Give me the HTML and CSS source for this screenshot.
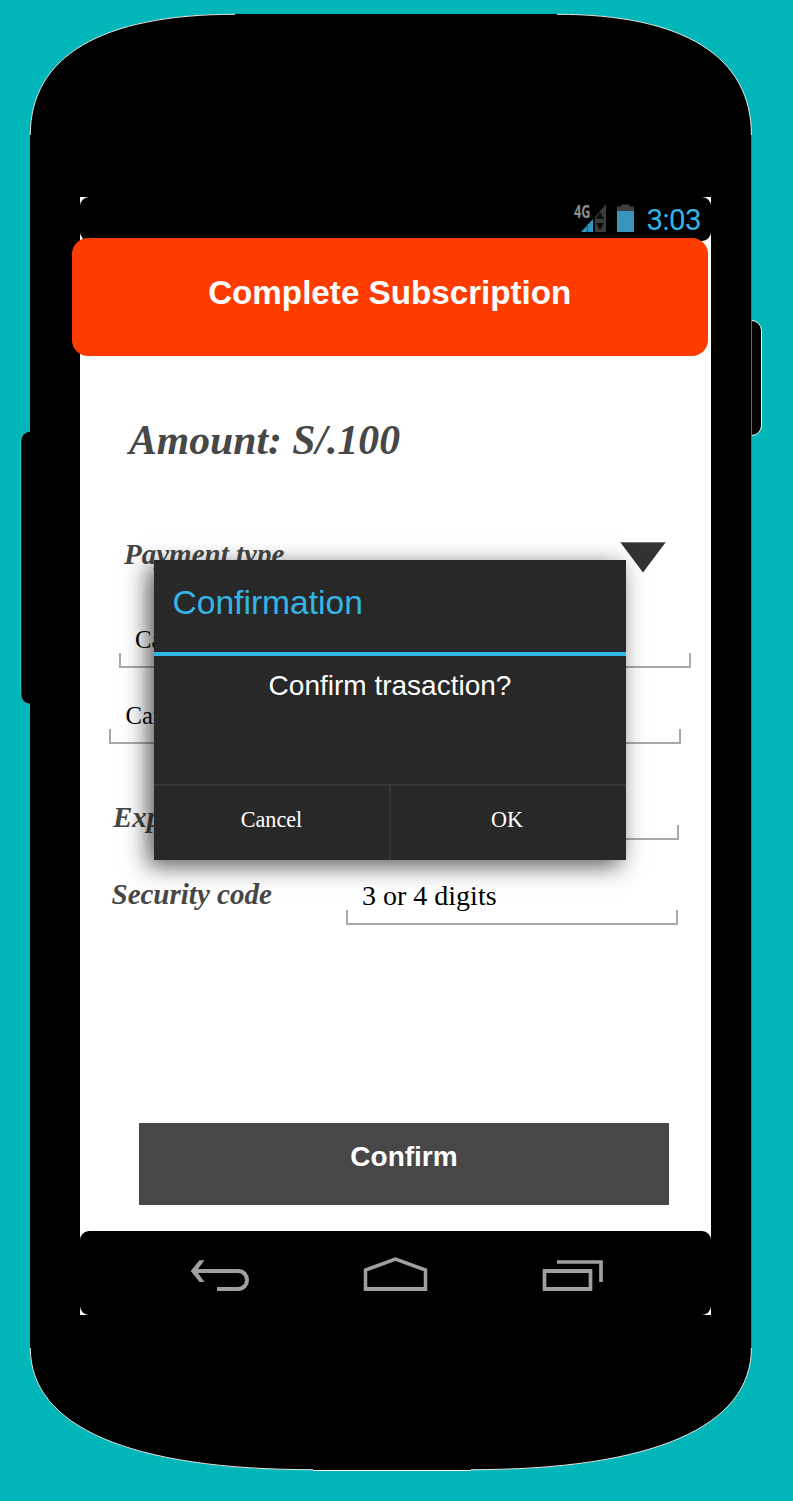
FILE: index.html
```
<!DOCTYPE html>
<html lang="en">
<head>
<meta charset="utf-8">
<title>Complete Subscription</title>
<link rel="stylesheet" href="styles.css">
</head>
<body>
<div class="stage">
  <svg class="phone-body" width="793" height="1501" viewBox="0 0 793 1501" aria-hidden="true">
    <rect x="21" y="431.5" width="30" height="272.5" rx="9" fill="#000" stroke="#fff" stroke-width=".3"/>
    <rect x="731" y="320.5" width="30.5" height="115" rx="10" fill="#000" stroke="#fff" stroke-width="1"/>
    <path d="M30 135C30 56 102 14 235 14H557C683 14 751.5 56 751.5 135V1348C751.5 1427 652 1470 471 1470H313C131 1470 30 1427 30 1348Z"/>
    <g fill="none" stroke="#fff" stroke-width=".9">
      <path d="M30.300 135C30.300 56 102 14.300 235 14.300M557 14.300C683 14.300 751.400 56 751.400 135M751.400 1348C751.400 1427 652 1469.700 471 1469.700M313 1469.700C131 1469.700 30.300 1427 30.300 1348"/>
      <path d="M313 1470.5H471" stroke-width="1"/>
      <path d="M751.5 135V1348" stroke="#666" stroke-width="1"/>
    </g>
  </svg>

  <main class="screen">
    <div class="status">
      <svg width="64" height="32" viewBox="572 202 64 32" aria-hidden="true">
        <text class="network" x="574" y="217.5" textLength="16.500" lengthAdjust="spacingAndGlyphs">4G</text>
        <path d="M606 204V232H595V217Z" fill="#3b3b3b"/>
        <path d="M600 212l4 7h-8zM600 230l4-7h-8z" fill="#0c0c0c"/>
        <path d="M581 232L593 219V232Z" fill="#2e95bd"/>
        <path d="M587.5 224V232" stroke="#175a76" stroke-width="1"/>
        <path d="M617 206.500H621.500V204.500H629.500V206.500H634V211H617Z" fill="#404040"/>
        <rect x="617" y="211" width="17" height="21" fill="#3a93b8"/>
      </svg>
      <span class="clock">3:03</span>
    </div>
    <header class="title">Complete Subscription</header>

    <section class="form">
      <h1 class="amount">Amount: S/.100</h1>
      <div class="type-row">
        <span class="label">Payment type</span>
        <svg width="46" height="31" viewBox="0 0 46 31" aria-hidden="true"><path d="M.5 .5H45.500L23 30.500Z" fill="#333"/><path d="M.5 .5H45.500" stroke="#777" stroke-width="1"/></svg>
      </div>
      <div class="field card-number"><span>Card number</span><i class="bracket"></i></div>
      <div class="field card-name"><span>Card holder</span><i class="bracket"></i></div>
      <div class="split expiry">
        <span class="label">Expiration</span>
        <div class="field"><i class="bracket"></i></div>
      </div>
      <div class="split security">
        <span class="label">Security code</span>
        <div class="field"><span>3 or 4 digits</span><i class="bracket"></i></div>
      </div>
      <button class="confirm">Confirm</button>
    </section>

    <nav class="navbar">
      <svg width="631" height="84" viewBox="80 1231 631 84" fill="none" stroke="#a0a0a0" stroke-width="4" aria-hidden="true">
        <path d="M194 1271H238C250 1271 250 1289 238 1289H217"/>
        <path d="M190.700 1271L199.500 1260.300H204.500L196.500 1271L204.500 1282H199.500Z" fill="#a0a0a0" stroke="none"/>
        <path d="M365.500 1289V1270L395.500 1259.200L425.500 1270V1289Z" stroke-width="3.500"/>
        <path d="M364 1289H427M543 1289H592M543 1271H592"/>
        <path d="M544.500 1271H590.500V1289H544.500ZM557 1262H601V1282" stroke-width="3.700"/>
      </svg>
    </nav>
  </main>

  <div class="dialog" role="dialog">
    <h2 class="dialog-title">Confirmation</h2>
    <p class="dialog-text">Confirm trasaction?</p>
    <div class="dialog-actions">
      <button>Cancel</button>
      <button>OK</button>
    </div>
  </div>
</div>
</body>
</html>
```
FILE: styles.css
```
* { box-sizing: border-box; }
body {
  margin: 0;
  background: #00b6b8;
  font-family: "Liberation Serif", serif;
}
.stage {
  position: relative;
  width: 793px;
  height: 1501px;
  padding: 197px 82px 186px 80px;
  overflow: hidden;
}
.phone-body { position: absolute; left: 0; top: 0; }
.screen {
  position: relative;
  display: flex;
  flex-direction: column;
  width: 631px;
  height: 1118px;
  background: #fff;
}
.status {
  display: flex;
  flex: none;
  justify-content: flex-end;
  gap: 11px;
  height: 44px;
  padding: 5px 10px 0 0;
  border-radius: 9px;
  background: #000;
}
.status svg { overflow: visible; }
.network { font: bold 17px "Open Sans", sans-serif; fill: #8c8c8c; }
.clock {
  font: 29.5px/36px Roboto, sans-serif;
  letter-spacing: -.6px;
  color: #33b5e5;
}
.title {
  display: flex;
  flex: none;
  align-items: center;
  justify-content: center;
  width: 635.5px;
  height: 118px;
  margin: -2.6px 0 0 -8px;
  padding-bottom: 9px;
  border-radius: 16px;
  background: #ff3c00;
  color: #fff;
  font: bold 33.2px/40px "Liberation Sans", sans-serif;
}
.form {
  display: flex;
  flex: 1;
  flex-direction: column;
  align-items: flex-start;
  min-height: 0;
}
.amount {
  margin: 59.6px 0 0 49px;
  color: #474747;
  font: italic bold 41.7px/48px "Liberation Serif", serif;
}
.label {
  color: #474747;
  font: italic bold 29px/34px "Liberation Serif", serif;
}
.type-row {
  display: flex;
  justify-content: space-between;
  width: 542px;
  height: 34px;
  margin: 73px 0 0 44px;
}
.type-row svg { margin-top: 5px; }
.field {
  display: grid;
  width: 572px;
  height: 44px;
  color: #000;
  font-size: 24.7px;
  line-height: 30px;
}
.field > * { grid-area: 1 / 1; }
.field > span { padding-left: 16px; }
.bracket {
  align-self: end;
  height: 15px;
  border: 2px solid #a9a9a9;
  border-top: 0;
}
.card-number { margin: 53px 0 0 39px; }
.card-name { margin: 32px 0 0 29px; }
.card-number > span, .card-name > span { padding-top: 1px; }
.card-name > span { padding-left: 16.5px; }
.split { display: flex; justify-content: space-between; }
.split .field { width: 332px; height: auto; font-size: 28px; line-height: 34px; }
.expiry { width: 566px; height: 40px; margin: 56px 0 0 33px; }
.security { width: 566.5px; height: 46px; margin: 39px 0 0 31.5px; }
.security .label { margin-top: -2px; }
.confirm {
  width: 530px;
  height: 82px;
  margin: 198px 0 0 59px;
  padding: 0 0 15px;
  border: 0;
  background: #474747;
  color: #fff;
  font: bold 28px/32px "Liberation Sans", sans-serif;
}
.navbar {
  flex: none;
  height: 84px;
  border-radius: 9px;
  background: #000;
}
.navbar svg { display: block; }
.dialog {
  position: absolute;
  left: 154px;
  top: 560px;
  display: flex;
  flex-direction: column;
  width: 472px;
  height: 300px;
  background: #282828;
  color: #fff;
  box-shadow: -6px 6px 22px rgba(0, 0, 0, .65);
}
.dialog-title {
  height: 96px;
  margin: 0;
  padding: 23px 0 0 18.5px;
  border-bottom: 4px solid #33b5e5;
  color: #33b5e5;
  font: 33.6px/40px "Liberation Sans", sans-serif;
}
.dialog-text {
  flex: 1;
  margin: 0;
  padding-top: 13px;
  text-align: center;
  font: 28px/34px "Liberation Sans", sans-serif;
}
.dialog-actions {
  display: grid;
  grid-template-columns: 235px 237px;
  height: 76px;
  border-top: 2px solid #363636;
}
.dialog-actions button {
  padding: 0 0 6px;
  border: 0;
  background: none;
  color: #fff;
  font: 22.2px/26px "Liberation Serif", serif;
}
.dialog-actions button + button { padding-right: 3px; border-left: 2px solid #363636; }
```
